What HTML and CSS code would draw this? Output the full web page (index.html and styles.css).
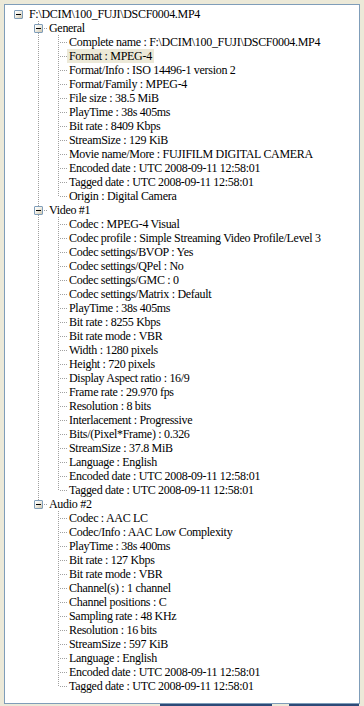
FILE: index.html
```html
<!DOCTYPE html>
<html lang="en">
<head>
  <meta charset="UTF-8">
  <title>MediaInfo - Tree</title>
  <link rel="stylesheet" href="styles.css">
</head>
<body>
  <div class="panel">
    <ul class="tree">
      <li class="root">
        <div class="row"><span class="toggle"></span><span class="label">F:\DCIM\100_FUJI\DSCF0004.MP4</span></div>
        <ul>
          <li>
            <div class="row"><span class="toggle"></span><span class="label">General</span></div>
            <ul>
              <li><div class="row"><span class="label">Complete name : F:\DCIM\100_FUJI\DSCF0004.MP4</span></div></li>
              <li><div class="row"><span class="label selected">Format : MPEG-4</span></div></li>
              <li><div class="row"><span class="label">Format/Info : ISO 14496-1 version 2</span></div></li>
              <li><div class="row"><span class="label">Format/Family : MPEG-4</span></div></li>
              <li><div class="row"><span class="label">File size : 38.5 MiB</span></div></li>
              <li><div class="row"><span class="label">PlayTime : 38s 405ms</span></div></li>
              <li><div class="row"><span class="label">Bit rate : 8409 Kbps</span></div></li>
              <li><div class="row"><span class="label">StreamSize : 129 KiB</span></div></li>
              <li><div class="row"><span class="label">Movie name/More : FUJIFILM DIGITAL CAMERA</span></div></li>
              <li><div class="row"><span class="label">Encoded date : UTC 2008-09-11 12:58:01</span></div></li>
              <li><div class="row"><span class="label">Tagged date : UTC 2008-09-11 12:58:01</span></div></li>
              <li><div class="row"><span class="label">Origin : Digital Camera</span></div></li>
            </ul>
          </li>
          <li>
            <div class="row"><span class="toggle"></span><span class="label">Video #1</span></div>
            <ul>
              <li><div class="row"><span class="label">Codec : MPEG-4 Visual</span></div></li>
              <li><div class="row"><span class="label">Codec profile : Simple Streaming Video Profile/Level 3</span></div></li>
              <li><div class="row"><span class="label">Codec settings/BVOP : Yes</span></div></li>
              <li><div class="row"><span class="label">Codec settings/QPel : No</span></div></li>
              <li><div class="row"><span class="label">Codec settings/GMC : 0</span></div></li>
              <li><div class="row"><span class="label">Codec settings/Matrix : Default</span></div></li>
              <li><div class="row"><span class="label">PlayTime : 38s 405ms</span></div></li>
              <li><div class="row"><span class="label">Bit rate : 8255 Kbps</span></div></li>
              <li><div class="row"><span class="label">Bit rate mode : VBR</span></div></li>
              <li><div class="row"><span class="label">Width : 1280 pixels</span></div></li>
              <li><div class="row"><span class="label">Height : 720 pixels</span></div></li>
              <li><div class="row"><span class="label">Display Aspect ratio : 16/9</span></div></li>
              <li><div class="row"><span class="label">Frame rate : 29.970 fps</span></div></li>
              <li><div class="row"><span class="label">Resolution : 8 bits</span></div></li>
              <li><div class="row"><span class="label">Interlacement : Progressive</span></div></li>
              <li><div class="row"><span class="label">Bits/(Pixel*Frame) : 0.326</span></div></li>
              <li><div class="row"><span class="label">StreamSize : 37.8 MiB</span></div></li>
              <li><div class="row"><span class="label">Language : English</span></div></li>
              <li><div class="row"><span class="label">Encoded date : UTC 2008-09-11 12:58:01</span></div></li>
              <li><div class="row"><span class="label">Tagged date : UTC 2008-09-11 12:58:01</span></div></li>
            </ul>
          </li>
          <li>
            <div class="row"><span class="toggle"></span><span class="label">Audio #2</span></div>
            <ul>
              <li><div class="row"><span class="label">Codec : AAC LC</span></div></li>
              <li><div class="row"><span class="label">Codec/Info : AAC Low Complexity</span></div></li>
              <li><div class="row"><span class="label">PlayTime : 38s 400ms</span></div></li>
              <li><div class="row"><span class="label">Bit rate : 127 Kbps</span></div></li>
              <li><div class="row"><span class="label">Bit rate mode : VBR</span></div></li>
              <li><div class="row"><span class="label">Channel(s) : 1 channel</span></div></li>
              <li><div class="row"><span class="label">Channel positions : C</span></div></li>
              <li><div class="row"><span class="label">Sampling rate : 48 KHz</span></div></li>
              <li><div class="row"><span class="label">Resolution : 16 bits</span></div></li>
              <li><div class="row"><span class="label">StreamSize : 597 KiB</span></div></li>
              <li><div class="row"><span class="label">Language : English</span></div></li>
              <li><div class="row"><span class="label">Encoded date : UTC 2008-09-11 12:58:01</span></div></li>
              <li><div class="row"><span class="label">Tagged date : UTC 2008-09-11 12:58:01</span></div></li>
            </ul>
          </li>
        </ul>
      </li>
    </ul>
  </div>
  <div class="buttons">
    <span class="btn-top first"></span>
    <span class="btn-top second"></span>
  </div>
</body>
</html>
```

FILE: styles.css
```css
html, body { margin: 0; padding: 0; }
body {
  background: #ece9d8;
  font-family: "Liberation Serif", "Times New Roman", serif;
  font-size: 12px;
  letter-spacing: -0.3px;
  color: #000;
  width: 364px;
  height: 706px;
  overflow: hidden;
}

.panel {
  margin: 4px 4px 0 4px;
  width: 354px;
  height: 698px;
  border: 1px solid #7f9db9;
  background: #fff;
  overflow: hidden;
}

.tree, .tree ul { list-style: none; margin: 0; }
.tree { padding: 2px 0 0 3px; }
.tree ul { padding-left: 20px; }
.tree li { position: relative; }

.row {
  position: relative;
  display: flex;
  height: 14px;
  line-height: 14px;
  padding-left: 19px;
  white-space: nowrap;
}

/* tree lines */
.tree ul > li::before {
  content: "";
  position: absolute;
  left: 10px;
  top: 0;
  bottom: 0;
  width: 1px;
  background: repeating-linear-gradient(to bottom, #a0a0a0 0 1px, transparent 1px 2px);
}
.tree ul > li:last-child::before { bottom: auto; height: 8px; }
.tree ul .row::before {
  content: "";
  position: absolute;
  left: 11px;
  top: 7px;
  width: 8px;
  height: 1px;
  background: repeating-linear-gradient(to right, transparent 0 1px, #a0a0a0 1px 2px);
}

.toggle {
  position: absolute;
  left: 6px;
  top: 3px;
  width: 7px;
  height: 7px;
  border: 1px solid #7f9db9;
  border-radius: 1px;
  background: linear-gradient(135deg, #fff 0%, #f4f2ea 40%, #cfc6ae 100%);
  z-index: 1;
}
.toggle::after {
  content: "";
  position: absolute;
  left: 1px;
  top: 3px;
  width: 5px;
  height: 1px;
  background: #000;
}

.label {
  padding: 0 2px;
  height: 14px;
}
.label.selected { background: #ece9d8; }

.buttons {
  display: flex;
  height: 2px;
}
.btn-top { height: 2px; background: #2c4a78; }
.btn-top.first { margin-left: 160px; width: 112px; }
.btn-top.second { margin-left: 17px; width: 70px; }
```
